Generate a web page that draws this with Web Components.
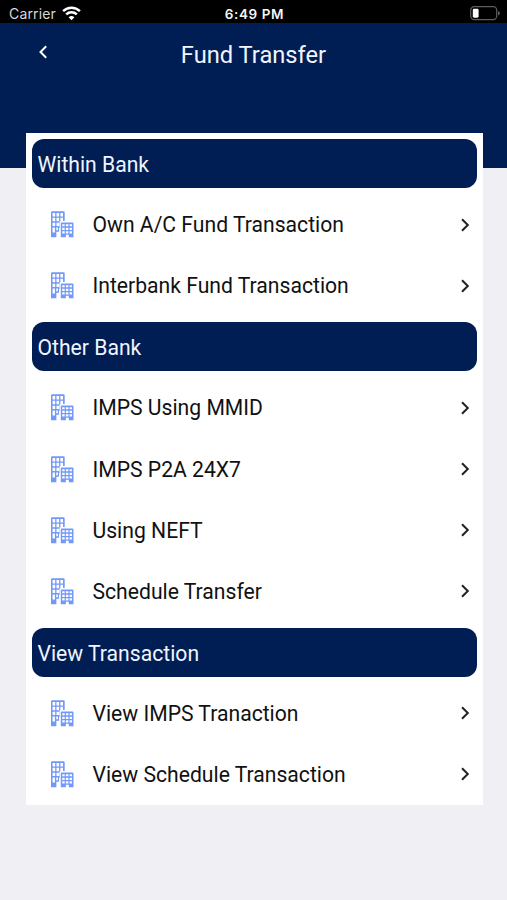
<!DOCTYPE html>
<html lang="en">
<head>
<meta charset="utf-8">
<title>Fund Transfer</title>
<style>
	html, body{height: 100%;}
	body{margin: 0; background: #efeff4; font-family: Roboto, "Noto Sans", sans-serif; --navy: #001e54;}
</style>
</head>
<body>
<fund-screen></fund-screen>

<template id="status-bar"><style>
	:host{display: grid; grid-template-columns: 1fr auto 1fr; align-items: center; box-sizing: border-box; height: 23px; padding: 4px 7px 0 9px; background: #000; color: #d8d8d8; font: 14px/18px Inter, "Liberation Sans", sans-serif;}
	.carrier{display: flex; align-items: center; gap: 6px; letter-spacing: 0.15px;}
	.carrier svg{margin-top: -1px;}
	.time{color: #f4f4f4; font-weight: 600; font-size: 13.5px; letter-spacing: 0.6px;}
	.battery{justify-self: end; margin-top: -1px;}
	svg{display: block;}
</style>
	<div class="carrier"><slot name="carrier"></slot>
		<svg width="19" height="15" viewBox="0 0 19 15" fill="none" stroke="#fff" stroke-width="2.5">
			<path d="M1.1 5.2C5.8.6 13.2.6 17.9 5.2"/>
			<path d="M4.2 8.4C7.2 5.6 11.8 5.6 14.8 8.4"/>
			<path d="M9.5 14.2 6.6 11.2Q9.5 8.7 12.4 11.2Z" fill="#fff" stroke="none"/>
		</svg>
	</div>
	<div class="time"><slot name="time"></slot></div>
	<svg class="battery" width="30" height="15" viewBox="0 0 30 15">
		<rect x=".7" y=".7" width="26" height="13" rx="3.6" fill="none" stroke="#5e5e5e" stroke-width="1.2"/>
		<rect x="2.8" y="2.7" width="5.8" height="9" rx="1.4" fill="#fff"/>
		<path d="M28 5v4.5q1.9-.7 1.9-2.25T28 5z" fill="#5e5e5e"/>
	</svg>
</template>

<template id="page-header"><style>
	:host{display: grid; grid-template-columns: 1fr auto 1fr; box-sizing: border-box; height: 145px; padding: 17px 37px 0; background: var(--navy); color: #f0f5ff;}
	h1{margin: 1px 0 0; font-size: 23.7px; line-height: 28px; font-weight: 400;}
	svg{display: block; margin-top: 4px;}
</style>
	<svg width="12" height="16" viewBox="0 0 12 16" fill="none" stroke="#fff" stroke-width="2"><path d="M9.2 2.2 3.5 8l5.7 5.8"/></svg>
	<h1><slot></slot></h1>
</template>

<template id="menu-section"><style>
	:host{display: block;}
	h2{box-sizing: border-box; height: 49.1px; margin: 6px; padding: 0 6px; border-radius: 12px; background: var(--navy); color: #f0f5ff; font-size: 21.15px; line-height: 51px; font-weight: 400;}
</style>
	<h2></h2>
	<slot></slot>
</template>

<template id="menu-item"><style>
	:host{display: flex; align-items: center; box-sizing: border-box; height: 61.1px; padding: 0 11.5px 0 25.5px; color: #111; font-size: 21.15px;}
	.label{flex: 1; margin-left: 19px; white-space: nowrap; line-height: 25px;}
	.building{fill: #7199fa;}
	svg{display: block; flex: none;}
</style>
	<svg class="building" width="22.5" height="27" viewBox="0 0 23 27">
		<path fill-rule="evenodd" d="M1.2 0H12.8Q14 0 14 1.2V10H10V17H8.2V21H5.5V26.5H0V1.2Q0 0 1.2 0z
			M1.6 1.8V5.2H4.3V1.8z M5.6 1.8V5.2H8.3V1.8z M9.6 1.8V5.2H12.3V1.8z
			M1.6 6.7V10.1H4.3V6.7z M5.6 6.7V10.1H8.3V6.7z M9.6 6.7V10.1H12.3V6.7z
			M1.6 11.6V15H4.3V11.6z M5.6 11.6V15H8.7V11.6z
			M1.6 16.5V21.8H4V16.5z M5.4 16.5V19.5H7.1V16.5z"/>
		<path fill="#fff" d="M8.8 10.2H14.5V12H10.2V27H8.8z"/>
		<path fill-rule="evenodd" d="M11 11.5H22Q23 11.5 23 12.5V26.5H18.2V24H15.2V26.5H10V12.5Q10 11.5 11 11.5z
			M11.5 13.2V15.4H14V13.2z M15.2 13.2V15.4H17.8V13.2z M19 13.2V15.4H21.5V13.2z
			M11.5 16.8V19H14V16.8z M15.2 16.8V19H17.8V16.8z M19 16.8V19H21.5V16.8z
			M11.5 20.4V22.6H14V20.4z M15.2 20.4V22.6H17.8V20.4z M19 20.4V22.6H21.5V20.4z"/>
	</svg>
	<span class="label"><slot></slot></span>
	<svg width="12" height="16" viewBox="0 0 12 16" fill="none" stroke="#222" stroke-width="2"><path d="M3 2.3 8.8 8 3 13.7"/></svg>
</template>

<template id="fund-screen"><style>
	:host{display: block; height: 100%;}
	main{display: flow-root; box-sizing: border-box; width: 457px; height: 672px; margin: -35px 24.5px 0 25.5px; position: relative; background: #fff;}
</style>
	<status-bar><span slot="carrier">Carrier</span><span slot="time">6:49 PM</span></status-bar>
	<page-header>Fund Transfer</page-header>
	<main>
		<menu-section heading="Within Bank">
			<menu-item>Own A/C Fund Transaction</menu-item>
			<menu-item>Interbank Fund Transaction</menu-item>
		</menu-section>
		<menu-section heading="Other Bank">
			<menu-item>IMPS Using MMID</menu-item>
			<menu-item>IMPS P2A 24X7</menu-item>
			<menu-item>Using NEFT</menu-item>
			<menu-item>Schedule Transfer</menu-item>
		</menu-section>
		<menu-section heading="View Transaction">
			<menu-item>View IMPS Tranaction</menu-item>
			<menu-item>View Schedule Transaction</menu-item>
		</menu-section>
	</main>
</template>

<script>
	// every element is a clone of the template with its own name
	class TemplateElement extends HTMLElement {
		constructor() {
			super();
			const tpl = document.querySelector('template#' + this.localName);
			this.attachShadow({mode: 'open'}).appendChild(tpl.content.cloneNode(true));
		}
	}

	customElements.define('status-bar', class extends TemplateElement {});
	customElements.define('page-header', class extends TemplateElement {});
	customElements.define('menu-item', class extends TemplateElement {});
	customElements.define('menu-section', class extends TemplateElement {
		connectedCallback() {
			this.shadowRoot.querySelector('h2').textContent = this.getAttribute('heading');
		}
	});
	customElements.define('fund-screen', class extends TemplateElement {});
</script>
</body>
</html>
